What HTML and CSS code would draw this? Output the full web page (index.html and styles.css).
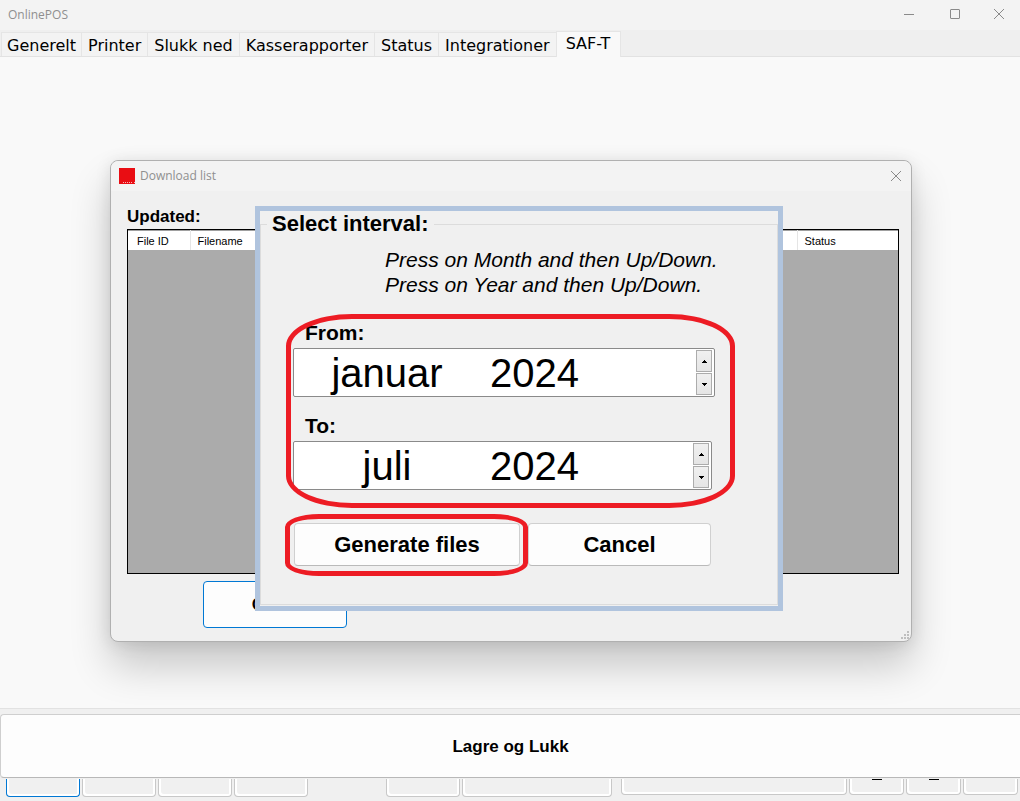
FILE: index.html
```html
<!DOCTYPE html>
<html lang="no">
<head>
<meta charset="utf-8">
<title>OnlinePOS</title>
<link rel="stylesheet" href="styles.css">
</head>
<body>
<div class="app">
  <header class="titlebar">
    <span class="titlebar-text">OnlinePOS</span>
    <div class="window-controls">
      <button class="window-button" aria-label="Minimize"><svg width="10" height="10" viewBox="0 0 10 10"><path d="M0 5.5H10"/></svg></button>
      <button class="window-button" aria-label="Maximize"><svg width="10" height="10" viewBox="0 0 10 10"><rect x=".5" y=".5" width="9" height="9" rx=".5"/></svg></button>
      <button class="window-button" aria-label="Close window"><svg width="10" height="10" viewBox="0 0 10 10"><path d="M0 0L10 10M10 0L0 10"/></svg></button>
    </div>
  </header>

  <nav class="tabs" role="tablist">
    <button class="tab" role="tab">Generelt</button>
    <button class="tab" role="tab">Printer</button>
    <button class="tab" role="tab">Slukk ned</button>
    <button class="tab" role="tab">Kasserapporter</button>
    <button class="tab" role="tab">Status</button>
    <button class="tab" role="tab">Integrationer</button>
    <button class="tab tab-selected" role="tab" aria-selected="true">SAF-T</button>
  </nav>

  <main class="page">
    <section class="window" aria-label="Download list">
      <header class="window-title">
        <svg class="logo" width="16" height="16" viewBox="0 0 16 16"><path fill="#e90d13" d="M0 0h16v16H0z"/><path fill="none" stroke="#f9b5b6" stroke-dasharray="1 1" d="M4 14.5h9M15 14.5h1"/></svg>
        <span class="titlebar-text">Download list</span>
        <button class="window-close" aria-label="Close download list"><svg width="10" height="10" viewBox="0 0 10 10"><path d="M0 0L10 10M10 0L0 10"/></svg></button>
      </header>
      <div class="window-body">
        <h2 class="updated">Updated:</h2>
        <div class="grid">
          <table class="grid-table">
            <colgroup><col class="col-id"><col class="col-name"><col class="col-status"></colgroup>
            <thead><tr><th scope="col">File ID</th><th scope="col">Filename</th><th scope="col">Status</th></tr></thead>
          </table>
        </div>
        <button class="close-list">Close</button>
      </div>
      <svg class="grip" width="8" height="8" viewBox="0 0 8 8"><path fill="#bfbfbf" d="M6 0h2v2H6zM3 3h2v2H3zM6 3h2v2H6zM0 6h2v2H0zM3 6h2v2H3zM6 6h2v2H6z"/></svg>

      <div class="interval">
        <fieldset class="group">
          <legend>Select interval:</legend>
          <p class="hint">Press on Month and then Up/Down.<br>Press on Year and then Up/Down.</p>
          <label class="field-label" for="from-month">From:</label>
          <div class="picker">
            <input class="month" id="from-month" value="januar">
            <input class="year" aria-label="From year" value="2024">
            <div class="spin">
              <button class="spin-button" aria-label="From up"><svg width="5" height="3" viewBox="0 0 5 3"><path d="M2 0h1v1h1v1h1v1H0V2h1V1h1z"/></svg></button>
              <button class="spin-button" aria-label="From down"><svg width="5" height="3" viewBox="0 0 5 3"><path d="M0 0h5v1H4v1H3v1H2V2H1V1H0z"/></svg></button>
            </div>
          </div>
          <label class="field-label" for="to-month">To:</label>
          <div class="picker picker-to">
            <input class="month" id="to-month" value="juli">
            <input class="year" aria-label="To year" value="2024">
            <div class="spin">
              <button class="spin-button" aria-label="To up"><svg width="5" height="3" viewBox="0 0 5 3"><path d="M2 0h1v1h1v1h1v1H0V2h1V1h1z"/></svg></button>
              <button class="spin-button" aria-label="To down"><svg width="5" height="3" viewBox="0 0 5 3"><path d="M0 0h5v1H4v1H3v1H2V2H1V1H0z"/></svg></button>
            </div>
          </div>
          <div class="actions">
            <button class="action generate">Generate files</button>
            <button class="action cancel">Cancel</button>
          </div>
        </fieldset>
        <div class="mark mark-dates"></div>
        <div class="mark mark-generate"></div>
      </div>
    </section>
  </main>

  <footer class="footer">
    <button class="save">Lagre og Lukk</button>
    <div class="strip">
      <div class="strip-item strip-focus"></div>
      <div class="strip-item"></div>
      <div class="strip-item"></div>
      <div class="strip-item"></div>
      <div class="strip-item strip-after-gap"></div>
      <div class="strip-item strip-double"></div>
      <div class="strip-item strip-short strip-wide"></div>
      <div class="strip-item strip-short strip-small"><span class="glyph-edge"></span></div>
      <div class="strip-item strip-short strip-small"><span class="glyph-edge"></span></div>
      <div class="strip-item strip-short strip-small"></div>
    </div>
  </footer>
</div>
</body>
</html>
```

FILE: styles.css
```css
* { box-sizing: border-box; }

body {
  margin: 0;
  background: #f0f0f0;
  color: #000;
  font-family: "Liberation Sans", Arial, sans-serif;
}

button, input { margin: 0; padding: 0; font: inherit; color: inherit; }
svg { display: block; }

.app { display: flex; flex-direction: column; min-height: 100vh; }

/* Main window frame */
.titlebar {
  display: flex;
  align-items: center;
  justify-content: space-between;
  height: 30px;
  padding-left: 8px;
  background: #f3f3f3;
}
.titlebar-text { font: 12px/16px "Open Sans", "Noto Sans", sans-serif; color: #8f8f8f; }
.window-controls { display: flex; align-self: flex-start; }
.window-button, .window-close {
  display: grid;
  place-items: center;
  width: 46px;
  height: 28px;
  border: 0;
  background: none;
}
.window-button:last-child { width: 42px; }
.window-controls svg, .window-close svg { fill: none; stroke: #8a8a8a; overflow: visible; }

.tabs {
  display: flex;
  align-items: flex-end;
  height: 27px;
  padding-left: 1px;
  background: #efefef;
  border-bottom: 1px solid #e2e2e2;
}
.tab {
  height: 24px;
  padding: 2px 6px 0;
  border: 1px solid #e5e5e5;
  border-width: 1px 0 0 1px;
  background: #f3f3f3;
  font: 16px/22px "DejaVu Sans", Verdana, sans-serif;
  white-space: nowrap;
}
.tab:first-child { padding: 2px 5px 0 5px; }
.tab-selected {
  height: 26px;
  padding: 0 10px 2px 9px;
  margin-bottom: -1px;
  border-right-width: 1px;
  background: #f9f9f9;
}

.page { flex: 1; position: relative; background: #f9f9f9; border-bottom: 1px solid #e2e2e2; }

/* Download list window */
.window {
  position: absolute;
  top: 103px;
  left: 110px;
  width: 802px;
  border: 1px solid #b0b0b0;
  border-radius: 8px;
  background: #f0f0f0;
  box-shadow: 0 24px 40px rgba(0, 0, 0, .2), 0 2px 16px rgba(0, 0, 0, .1);
}
.window-title {
  display: flex;
  align-items: center;
  gap: 5px;
  height: 30px;
  padding-left: 8px;
  border-radius: 8px 8px 0 0;
  background: #f3f3f3;
}
.window-close { width: 30px; margin-left: auto; }
.window-body { padding: 16px 12px 13px 16px; }
.updated { margin: 0; font-size: 17px; line-height: 20px; }
.grid { height: 345px; margin-top: 2px; border: 1px solid #000; background: #ababab; }
.grid-table {
  width: 100%;
  border-collapse: collapse;
  table-layout: fixed;
  background: #fff;
  border-top: 1px solid #a0a0a0;
}
.grid-table th {
  height: 19px;
  padding: 2px 7px 0;
  border-right: 1px solid #e5e5e5;
  font-size: 11px;
  line-height: 14px;
  font-weight: normal;
  text-align: left;
}
.grid-table th:first-child { padding-left: 9px; }
.grid-table th:last-child { border-right: 0; }
.col-id { width: 62px; }
.col-status { width: 101px; }
.close-list {
  display: block;
  width: 144px;
  height: 47px;
  margin: 7px 0 0 76px;
  border: 1px solid #0078d4;
  border-radius: 4px;
  background: #fdfdfd;
  font-size: 17px;
  font-weight: bold;
}
.grip { position: absolute; right: 2px; bottom: 2px; }

/* Interval dialog */
.interval {
  position: absolute;
  top: 45px;
  left: 144px;
  width: 528px;
  border: 5px solid #b0c4de;
  background: #f0f0f0;
}
.group {
  min-width: 0;
  margin: 0 0 1px;
  padding: 10px 48px 38px 32px;
  border: 1px solid #dcdcdc;
  font-size: 22px;
}
.group legend { margin-left: -26px; padding: 0 5px; line-height: 26px; font-weight: bold; }
.hint { margin: 0 0 22px 92px; font-size: 21px; line-height: 25px; font-style: italic; white-space: nowrap; }
.field-label { display: block; margin-left: 12px; padding-bottom: 2px; line-height: 27px; font-size: 21px; font-weight: bold; }
.picker {
  display: flex;
  align-items: center;
  width: 422px;
  height: 49px;
  margin-bottom: 15px;
  padding: 0 2px 0 33px;
  border: 1px solid #8a8a8a;
  border-radius: 2px;
  background: #fff;
  font-size: 40px;
}
.picker-to { width: 419px; }
.month, .year { height: 47px; padding-top: 2px; border: 0; outline: 0; background: none; }
.month { width: 120px; text-align: center; }
.year { width: 100px; margin-left: 43px; }
.spin { display: flex; flex-direction: column; gap: 1px; margin-left: auto; }
.spin-button {
  display: grid;
  place-items: center;
  width: 16px;
  height: 22px;
  border: 1px solid #acacac;
  background: linear-gradient(#f0f0f0, #e5e5e5);
}
.actions { display: flex; gap: 8px; margin-top: 33px; padding-left: 1px; }
.action {
  height: 43px;
  border: 1px solid #d0d0d0;
  border-bottom-color: #bababa;
  border-radius: 4px;
  background: #fdfdfd;
  font-weight: bold;
}
.generate { width: 226px; }
.cancel { width: 183px; }

/* Red pen outlines over the dialog */
.mark { position: absolute; border: 5px solid #ed1c24; pointer-events: none; }
.mark-dates { top: 103px; left: 26px; width: 449px; height: 194px; border-radius: 66px / 32px; }
.mark-generate { top: 303px; left: 25px; width: 243px; height: 62px; border-radius: 34px / 13px; }

/* Bottom area */
.footer { padding-top: 5px; background: #f0f0f0; }
.save {
  display: block;
  width: 100%;
  height: 64px;
  padding-top: 2px;
  border: 1px solid #cfcfcf;
  border-right: 0;
  border-bottom-color: #b8b8b8;
  border-radius: 4px 0 0 4px;
  background: #fdfdfd;
  font-size: 17px;
  font-weight: bold;
}
.strip { display: flex; gap: 2px; height: 23px; padding: 1px 2px 0 6px; }
.strip-item {
  flex: 1 1 74px;
  height: 18px;
  border: 1px solid #c8c8c8;
  border-top: 0;
  border-radius: 0 0 4px 4px;
  box-shadow: inset 2px -2px #fff, inset -2px 0 #fff;
}
.strip-focus { border-color: #0078d4; }
.strip-after-gap { margin-left: 76px; }
.strip-double { flex-basis: 150px; }
.strip-short { height: 16px; }
.strip-wide { flex-basis: 226px; margin-left: 7px; }
.strip-small { flex-basis: 55px; }
.glyph-edge { display: block; width: 10px; height: 1px; margin: 0 auto; background: #000; }
```
